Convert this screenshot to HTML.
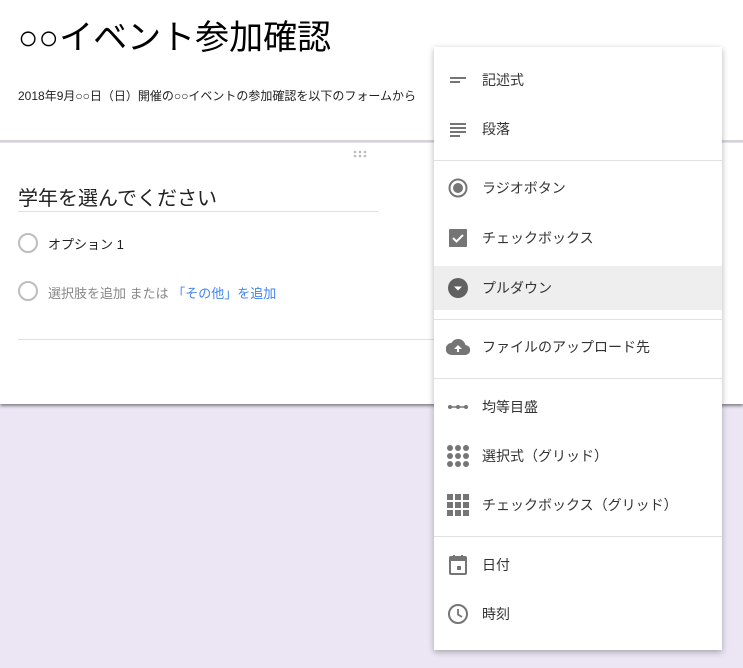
<!DOCTYPE html>
<html><head><meta charset="utf-8"><style>
*{margin:0;padding:0;box-sizing:border-box}
body{width:743px;height:668px;overflow:hidden;background:#ece6f4;position:relative;font-family:"Liberation Sans","Noto Sans CJK JP",sans-serif;color:#212121}
.top{position:absolute;left:0;top:0;width:743px;height:142px;background:#fff;border-bottom:2px solid #d5d5d5}
.card{position:absolute;left:0;top:143px;width:743px;height:261px;background:#fff;box-shadow:0 2px 3px rgba(0,0,0,.45)}
.t{position:absolute;white-space:nowrap}
.menu{position:absolute;left:434px;top:47px;width:288px;height:603px;background:#fff;box-shadow:0 2px 6px rgba(0,0,0,.3)}
.it{position:absolute;left:0;width:288px;height:44px}
.it .l{position:absolute;left:48px;top:50%;transform:translateY(-50%);font-size:14px;color:#333;white-space:nowrap}
.it svg{position:absolute;left:12px;top:50%;transform:translateY(-50%)}
.dv{position:absolute;left:0;width:288px;height:1px;background:#e0e0e0}
.rad{position:absolute;width:20px;height:20px;border:2px solid #bdbdbd;border-radius:50%}
</style></head><body>
<div class="top"></div>
<div class="t" style="left:18px;top:10px;font-size:34px;color:#000">○○イベント参加確認</div>
<div class="t" style="left:18px;top:87px;font-size:12px;color:#212121">2018年9月○○日（日）開催の○○イベントの参加確認を以下のフォームから</div>
<div class="card"></div>
<svg style="position:absolute;left:353px;top:150px" width="16" height="8"><g fill="#bbb"><circle cx="2" cy="2" r="1.3"/><circle cx="7" cy="2" r="1.3"/><circle cx="12" cy="2" r="1.3"/><circle cx="2" cy="6" r="1.3"/><circle cx="7" cy="6" r="1.3"/><circle cx="12" cy="6" r="1.3"/></g></svg>
<div class="t" style="left:18px;top:182px;font-size:20px;color:#212121">学年を選んでください</div>
<div style="position:absolute;left:18px;top:211px;width:360px;height:1px;background:#e0e0e0"></div>
<div class="rad" style="left:18px;top:233px"></div>
<div class="t" style="left:48px;top:234px;font-size:13px">オプション 1</div>
<div class="rad" style="left:18px;top:281px"></div>
<div class="t" style="left:48px;top:283px;font-size:13px;color:#888">選択肢を追加 または <span style="color:#4285f4">「その他」を追加</span></div>
<div style="position:absolute;left:18px;top:339px;width:420px;height:1px;background:#e0e0e0"></div>

<div class="menu">
<div class="it" style="top:11px"><svg width="24" height="24" viewBox="0 0 24 24"><path d="M4 9h16v2H4zM4 13h10v2H4z" fill="#757575"/></svg><div class="l">記述式</div></div>
<div class="it" style="top:60px"><svg width="24" height="24" viewBox="0 0 24 24"><path d="M4 6h16v2H4zM4 10h16v2H4zM4 14h16v2H4zM4 18h10v2H4z" fill="#757575"/></svg><div class="l">段落</div></div>
<div class="dv" style="top:113px"></div>
<div class="it" style="top:119px"><svg width="24" height="24" viewBox="0 0 24 24"><circle cx="12" cy="12" r="8.5" fill="none" stroke="#757575" stroke-width="2"/><circle cx="12" cy="12" r="5" fill="#757575"/></svg><div class="l">ラジオボタン</div></div>
<div class="it" style="top:169px"><svg width="24" height="24" viewBox="0 0 24 24"><rect x="3" y="3" width="18" height="18" rx="1" fill="#757575"/><path d="M7 12l3.5 3.5L17 9" fill="none" stroke="#fff" stroke-width="2"/></svg><div class="l">チェックボックス</div></div>
<div class="it" style="top:219px;background:#eeeeee"><svg width="24" height="24" viewBox="0 0 24 24"><circle cx="12" cy="12" r="10" fill="#616161"/><path d="M8 10.5h8l-4 4z" fill="#fff"/></svg><div class="l">プルダウン</div></div>
<div class="dv" style="top:272px"></div>
<div class="it" style="top:278px"><svg width="24" height="24" viewBox="0 0 24 24"><path d="M19.4 10A7.5 7.5 0 0 0 5.4 8 6 6 0 0 0 6 20h13a5 5 0 0 0 .4-10z" fill="#757575"/><path d="M12 10l-4 4h3v3h2v-3h3z" fill="#fff"/></svg><div class="l">ファイルのアップロード先</div></div>
<div class="dv" style="top:331px"></div>
<div class="it" style="top:338px"><svg width="24" height="24" viewBox="0 0 24 24"><path d="M2 12h20" stroke="#757575" stroke-width="1.5"/><circle cx="4" cy="12" r="2" fill="#757575"/><circle cx="12" cy="12" r="2" fill="#757575"/><circle cx="20" cy="12" r="2" fill="#757575"/></svg><div class="l">均等目盛</div></div>
<div class="it" style="top:387px"><svg width="24" height="24" viewBox="0 0 24 24" fill="#757575"><circle cx="4" cy="4" r="3"/><circle cx="12" cy="4" r="3"/><circle cx="20" cy="4" r="3"/><circle cx="4" cy="12" r="3"/><circle cx="12" cy="12" r="3"/><circle cx="20" cy="12" r="3"/><circle cx="4" cy="20" r="3"/><circle cx="12" cy="20" r="3"/><circle cx="20" cy="20" r="3"/></svg><div class="l">選択式（グリッド）</div></div>
<div class="it" style="top:436px"><svg width="24" height="24" viewBox="0 0 24 24" fill="#757575"><rect x="1" y="1" width="6" height="6"/><rect x="9" y="1" width="6" height="6"/><rect x="17" y="1" width="6" height="6"/><rect x="1" y="9" width="6" height="6"/><rect x="9" y="9" width="6" height="6"/><rect x="17" y="9" width="6" height="6"/><rect x="1" y="17" width="6" height="6"/><rect x="9" y="17" width="6" height="6"/><rect x="17" y="17" width="6" height="6"/></svg><div class="l">チェックボックス（グリッド）</div></div>
<div class="dv" style="top:489px"></div>
<div class="it" style="top:496px"><svg width="24" height="24" viewBox="0 0 24 24"><path d="M5 4h14a1 1 0 0 1 1 1v15a1 1 0 0 1-1 1H5a1 1 0 0 1-1-1V5a1 1 0 0 1 1-1z" fill="none" stroke="#757575" stroke-width="2"/><rect x="4" y="4" width="16" height="4" fill="#757575"/><rect x="7" y="2" width="2" height="3" fill="#757575"/><rect x="15" y="2" width="2" height="3" fill="#757575"/><rect x="11" y="13" width="4" height="4" fill="#757575"/></svg><div class="l">日付</div></div>
<div class="it" style="top:545px"><svg width="24" height="24" viewBox="0 0 24 24"><circle cx="12" cy="12" r="9" fill="none" stroke="#757575" stroke-width="2"/><path d="M12 7v5.5l4 2.5" fill="none" stroke="#757575" stroke-width="1.8"/></svg><div class="l">時刻</div></div>
</div>
</body></html>
